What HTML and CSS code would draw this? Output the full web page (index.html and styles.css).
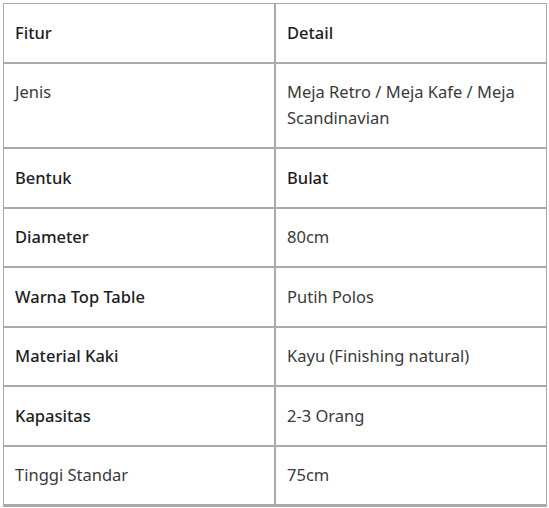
FILE: index.html
```html
<!DOCTYPE html>
<html lang="id">
<head>
<meta charset="utf-8">
<title>Spesifikasi Meja</title>
<link rel="stylesheet" href="styles.css">
</head>
<body>
<div class="wrap">
<table class="spec">
  <thead>
    <tr><th>Fitur</th><th>Detail</th></tr>
  </thead>
  <tbody>
    <tr><td>Jenis</td><td>Meja Retro / Meja Kafe / Meja Scandinavian</td></tr>
    <tr><td class="strong">Bentuk</td><td class="strong">Bulat</td></tr>
    <tr><td class="strong">Diameter</td><td>80cm</td></tr>
    <tr><td class="strong">Warna Top Table</td><td>Putih Polos</td></tr>
    <tr><td class="strong">Material Kaki</td><td>Kayu (Finishing natural)</td></tr>
    <tr><td class="strong">Kapasitas</td><td>2-3 Orang</td></tr>
    <tr><td>Tinggi Standar</td><td>75cm</td></tr>
  </tbody>
</table>
</div>
</body>
</html>
```

FILE: styles.css
```css
html, body {
  margin: 0;
  padding: 0;
  background: #ffffff;
}
.wrap {
  padding: 3px 2px 0 3px;
}
.spec {
  width: 100%;
  border-collapse: separate;
  border-spacing: 0;
  table-layout: fixed;
  font-family: "Noto Sans", "Open Sans", sans-serif;
  font-size: 16.5px;
  line-height: 26px;
  color: #3a3a3a;
  border-bottom: 2px solid #aaaaaa;
}
.spec th,
.spec td {
  border: 1px solid #aaaaaa;
  padding: 15.5px 11px 16px;
  text-align: left;
  vertical-align: top;
  font-weight: 400;
}
.spec th,
.spec .strong {
  color: #1e1e1e;
  font-weight: 500;
}
```
